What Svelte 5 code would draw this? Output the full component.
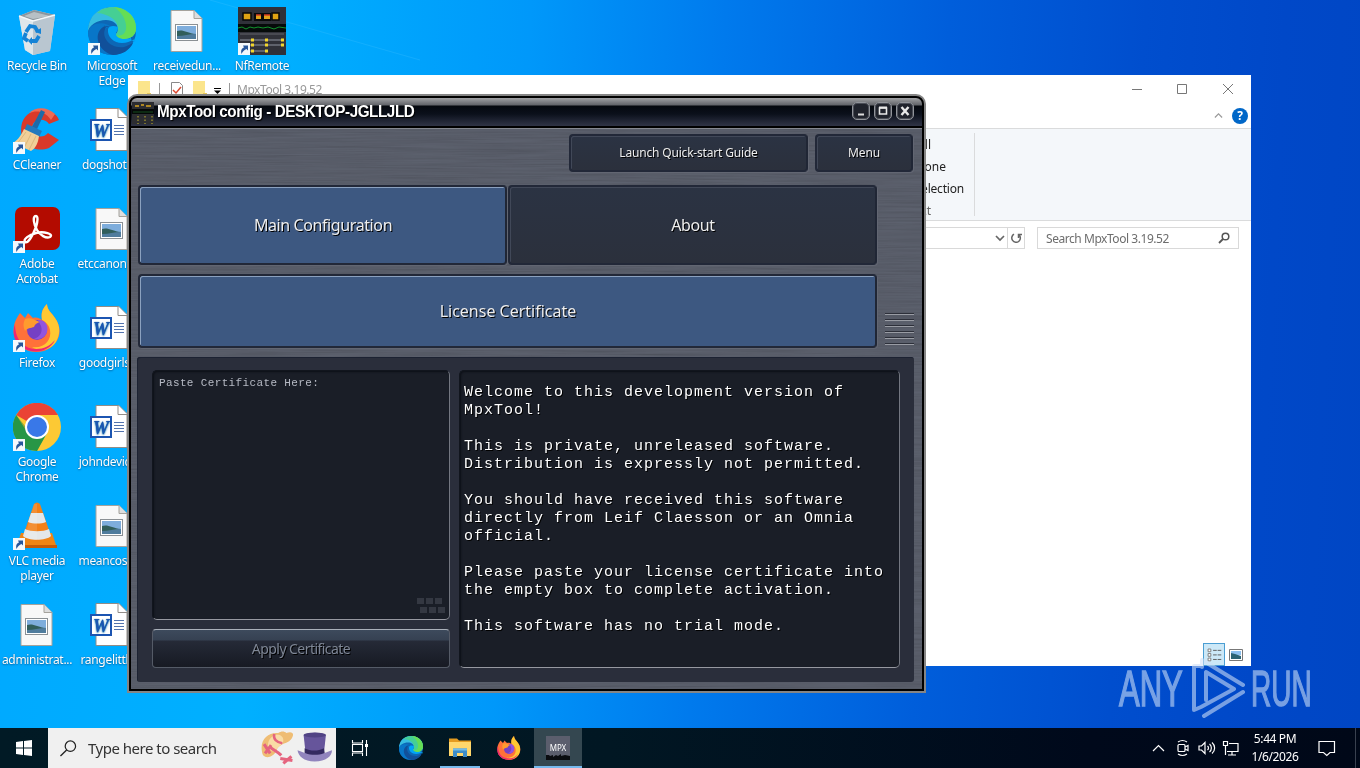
<script lang="ts">
  const shortcuts = [
    { icon: 'bin', label: 'Recycle Bin', link: false },
    { icon: 'ccleaner', label: 'CCleaner', link: true },
    { icon: 'acrobat', label: 'Adobe Acrobat', link: true },
    { icon: 'firefox', label: 'Firefox', link: true },
    { icon: 'chrome', label: 'Google Chrome', link: true },
    { icon: 'vlc', label: 'VLC media player', link: true },
    { icon: 'image', label: 'administrat...', link: false },
    { icon: 'edge', label: 'Microsoft Edge', link: true },
    { icon: 'word', label: 'dogshot.rtf', link: false },
    { icon: 'image', label: 'etccanon.jpg', link: false },
    { icon: 'word', label: 'goodgirls.rtf', link: false },
    { icon: 'word', label: 'johndevice...', link: false },
    { icon: 'image', label: 'meancosts...', link: false },
    { icon: 'word', label: 'rangelittle...', link: false },
    { icon: 'image', label: 'receivedun...', link: false },
    { icon: 'nfremote', label: 'NfRemote', link: true, col: 4 }
  ];

  const tabs = ['Main Configuration', 'About'];
  let active = $state('Main Configuration');

  const welcome = `Welcome to this development version of
MpxTool!

This is private, unreleased software.
Distribution is expressly not permitted.

You should have received this software
directly from Leif Claesson or an Omnia
official.

Please paste your license certificate into
the empty box to complete activation.

This software has no trial mode.`;

  const ribbon = ['Select all', 'Select none', 'Invert selection', 'Select'];
</script>

<svelte:head>
  <title>Desktop</title>
</svelte:head>

{#snippet icon(name: string)}
  <svg viewBox="0 0 48 48">
    {#if name === 'bin'}
      <path d="M6 9 21 3l21 5-5 36-17 4-8-5z" fill="#cfd8df" />
      <path d="m6 9 14 5 22-6-21-5z" fill="#8b969d" />
      <path d="m11 9 10-4 16 4-17 3z" fill="#b7c0c5" />
      <path d="m6 9 14 5v34l-8-5z" fill="#dfe6ea" />
      <path d="m20 14 22-6-5 36-17 4z" fill="#b9c6d0" />
      <path d="m6 9 14 5 22-6" fill="none" stroke="#f4f7f9" stroke-width="1.5" />
      <path d="m13 25 4-6 5 1 3 5m1 4-3 5h-4m-4 0-4-3 2-5" fill="none" stroke="#1583d6" stroke-width="3.8" />
      <path d="m22 25 6 2 0-6zM19 30v8l-4-4z" fill="#1583d6" />
    {:else if name === 'edge'}
      <circle cx="24" cy="24" r="24" fill="#0d67b5" />
      <path d="M0 25C0 8 12 0 24 0c14 0 24 9 24 21 0 7-5 11-12 11-5 0-8-2-8-4 0-2 2-2 2-6 0-5-5-9-12-9C9 13 1 18 0 25z" fill="#36bde0" />
      <path d="M15 2c15-6 33 3 33 19 0 7-5 11-12 11-5 0-8-2-8-4 0-2 2-2 2-6C30 13 21 7 9 6c2-2 4-3 6-4z" fill="#45cf94" />
      <path d="M26 0c13 1 22 10 22 21 0 7-5 11-12 11-5 0-8-2-8-4 7 2 11-3 10-10C37 10 32 4 26 0z" fill="#65dd55" />
      <path d="M17 18c-8 8-3 24 11 29-16 3-28-7-28-22 2-10 17-11 23-5-3 0-5 0-6 3z" fill="#0876c8" />
      <path d="M18 20c-6 10 4 22 18 20 4-1 8-4 9-4-3 7-11 12-20 12-13-3-19-17-13-25 2-3 6-5 10-3z" fill="#11509a" />
      <path d="M20 22c-1 8 6 14 14 14 5 0 8-2 11-3 2-1 3 0 2 2-3-1-4-2-4-4-9 3-16-1-15-5 1-2 2-2 2-6-5-2-9-1-10 2z" fill="#00a5f7" />
    {:else if name === 'ccleaner'}
      <path d="M46 14C41 1 15-1 9 17c-5 19 11 31 27 25l10-8-11-7c-5 6-15 4-16-4 0-10 12-12 17-5z" fill="#d9392a" />
      <path d="M42 8C34 0 22 1 16 7c8-3 16-2 22 7z" fill="#ee6a54" />
      <path d="M28 4 32 6 24 23 19 21z" fill="#1d6aa8" />
      <path d="m14 18 15 7-3 6-15-6z" fill="#2379bd" />
      <path d="m11 23 15 7c-1 7-3 12-8 15L0 37c6-4 8-8 11-14z" fill="#f1cf98" />
      <path d="m13 26-9 12m14-10-7 14m12-12-7 14" stroke="#dcb87c" fill="none" />
    {:else if name === 'acrobat'}
      <rect x="2" y="2" width="45" height="43" rx="7" fill="#b30b00" />
      <path d="M23 11c-4 0-2 9 1 14 3 5 9 9 13 7 4-3-6-6-14-4-7 2-13 6-11 9 3 2 8-7 11-15 2-6 2-11 0-11z" fill="none" stroke="#fff" stroke-width="2.4" />
    {:else if name === 'firefox'}
      <path d="M5 12 7 9l5 5 3-5 5 5c4-1 6 0 9 2-1-7 0-11 5-16 0 6 5 9 8 14 6 8 6 17 1 24-9 14-32 13-40-1C-1 28 0 20 5 12z" fill="#ff7139" />
      <path d="M34 0c0 6 5 9 8 14 6 8 5 17 1 24-7 10-18 9-24 5 12 2 20-7 18-17-1-5-4-8-8-10-1-7 0-11 5-16z" fill="#ffc832" />
      <path d="M2 20c0 18 11 25 21 25 8 0 14-3 19-9-7 15-30 15-39 1-3-5-3-11-1-17z" fill="#ee2673" />
      <circle cx="24" cy="26" r="10" fill="#7540c4" />
      <path d="M12 15c6-2 9 1 15 3-3 1-5 2-6 5-3 1-7 1-9 4-2-4-2-8 0-12z" fill="#ff9b2e" />
      <path d="M25 16c7-1 11 6 9 12-2 6-8 8-13 7 6-2 9-7 7-13z" fill="#9154df" />
    {:else if name === 'chrome'}
      <circle cx="24" cy="24" r="24" fill="#fcc934" />
      <path d="M24 24 3.2 12A24 24 0 0 1 45 12H24z" fill="#ea4335" />
      <path d="M3.2 12A24 24 0 0 0 24 48l10-18-20-1z" fill="#34a853" />
      <path d="M3.2 12A24 24 0 0 0 24 48l10-18-14 3z" fill="#188038" opacity=".45" />
      <circle cx="24" cy="24" r="12" fill="#fff" />
      <circle cx="24" cy="24" r="10" fill="#3978e8" />
    {:else if name === 'vlc'}
      <path d="M8 31h31l5 15H3z" fill="#ef8515" />
      <path d="M3 43h41v3H3z" fill="#c65c08" />
      <path d="M21 2c2-2 4-2 6 0l11 32c-4 6-24 6-28 0z" fill="#f28018" />
      <path d="m18 11 12 0 3 9c-5 2-13 2-18 0zM12 27c6 3 18 3 24 0l2 7c-5 5-23 5-28 0z" fill="#e4e7e9" />
      <path d="M21 2h3v36c-5 0-9-1-12-4z" fill="#fff" opacity=".12" />
    {:else if name === 'image'}
      <path d="M8 3.500h23l8 8v33H8z" fill="#f8f8f8" stroke="#a5a29c" />
      <path d="M31 3.500v8h8" fill="#ddd" stroke="#a5a29c" />
      <rect x="12.500" y="17.500" width="22" height="16" fill="#fff" stroke="#8b9094" />
      <rect x="14" y="19" width="19" height="13" fill="#7eaddc" />
      <path d="M14 24c6-2 10 2 19 3v5H14z" fill="#315e5b" />
      <path d="M14 29c7 0 12-2 19-2v5H14z" fill="#507c9d" />
    {:else if name === 'word'}
      <path d="M8 2.500h23l8 8v34H8z" fill="#fff" stroke="#918c87" />
      <path d="M30 2.500v9h9" fill="#fff" stroke="#918c87" />
      <path d="M26 19.500h10M26 22.500h10M26 25.500h10M26 28.500h10" stroke="#5273ad" />
      <rect x="3" y="14" width="20" height="20" fill="#fff" stroke="#1c55b1" stroke-width="2" />
      <text x="13" y="31" text-anchor="middle" class="w">W</text>
    {:else if name === 'nfremote'}
      <path d="M0 0h48v48H0z" fill="#303139" />
      <path d="M0 17h48v8H0z" fill="#060b0a" />
      <path d="M5 6h8v7H5zm29 0h7v7h-7z" fill="#dfa313" stroke="#090909" stroke-width="1.500" />
      <path d="M16 6h17v8H16z" fill="#0a0a0b" />
      <path d="M18 8h5v4h-5zm8 0h6v4h-6z" fill="#e0a41c" />
      <path d="M18 8h5m3 0h6" stroke="#d53a22" stroke-width="1.500" />
      <path d="m0 21 4-1 4 2 4-2 4 1 4-1 5 1 5-1 6 2 5-2 7 1" fill="none" stroke="#12942e" />
      <path d="M2 27h44" stroke="#62646c" />
      <path d="M2 33h42M2 38h42M2 44h28" stroke="#5f626c" stroke-width="2" />
      <path d="M13 33h3m11 0h3m13 0h3M13 38h3m11 0h3m13 0h3M13 44h3m11 0h3" stroke="#f2d62d" stroke-width="3" />
    {:else if name === 'folder'}
      <path d="M2 5h16l4 4h24v8H2z" fill="#e49b20" />
      <path d="M2 12h44v28H2z" fill="#ffd76c" />
      <path d="M10 25h28v17h-8V34H18v8h-8z" fill="#3d8dc9" />
      <path d="M10 25h28v4H10z" fill="#73bce8" />
    {/if}
  </svg>
{/snippet}

<div class="desktop">
  <svg class="wall" viewBox="0 0 1360 728" preserveAspectRatio="none">
    <path d="M210 0 420 60" stroke="#4cc4ff" opacity=".25" />
  </svg>

  <div class="icons">
    {#each shortcuts as s}
      <div class="shortcut" class:last={s.col === 4}>
        <div class="pic">
          {@render icon(s.icon)}
          {#if s.link}
            <svg class="arrow" viewBox="0 0 12 12"><path d="M0 0h12v12H0z" fill="#f4f8fc" /><path d="M3.500 11C2.500 7 4 5 6 4.500L5 2.500h5v5L8.500 6C6.500 7 5 8 3.500 11z" fill="#27569b" /></svg>
          {/if}
        </div>
        <span>{s.label}</span>
      </div>
    {/each}
  </div>

  <section class="explorer">
    <header>
      <svg class="quick" viewBox="0 0 100 26">
        <path d="M10 6h12v20H10z" fill="#fbe58c" /><path d="M19 18h4v8h-4z" fill="#e8c75a" />
        <path d="M31.500 8v12M101.500 8v12" stroke="#999" />
        <path d="M43.500 7.500h8l3 3V24h-11z" fill="#fff" stroke="#888" /><path d="m45 15 3 3 5-6" fill="none" stroke="#dc4a31" stroke-width="1.500" />
        <path d="M65 6h12v20H65z" fill="#fbe58c" /><path d="M75 18h4v8h-4z" fill="#e8c75a" />
        <path d="M86 13.500h7" stroke="#000" /><path d="M86 15.500h7l-3.500 3.500z" />
      </svg>
      <span class="caption">MpxTool 3.19.52</span>
      <svg class="controls" viewBox="0 0 106 12"><path d="M0 6.500h10M45.500 1.500h9v9h-9zM91 1l10 10M101 1 91 11" fill="none" stroke="#777" /></svg>
    </header>
    <div class="help">
      <svg viewBox="0 0 10 6" width="9"><path d="m1 5 4-4 4 4" fill="none" stroke="#999" stroke-width="1.300" /></svg>
      <b>?</b>
    </div>
    <div class="ribbon">
      <div class="select">
        {#each ribbon as r}<span>{r}</span>{/each}
      </div>
    </div>
    <div class="address">
      <div class="path">
        <svg viewBox="0 0 10 8" width="10"><path d="m1 2 4 4 4-4" fill="none" stroke="#666" stroke-width="1.700" /></svg>
        <i></i>
        <svg viewBox="0 0 12 12" width="12"><path d="M3 2.800A4.300 4.300 0 1 0 8 2.200M3.500 6V2.500H0" fill="none" stroke="#666" stroke-width="1.500" transform="matrix(-1 0 0 1 12 0)" /></svg>
      </div>
      <div class="find">
        <span>Search MpxTool 3.19.52</span>
        <svg viewBox="0 0 12 12" width="12"><circle cx="7.500" cy="4.500" r="3.300" fill="none" stroke="#555" stroke-width="1.500" /><path d="M5 7 1 11" stroke="#555" stroke-width="1.800" /></svg>
      </div>
    </div>
    <footer>
      <div class="view on">
        <svg viewBox="0 0 22 22"><path d="M4.500 5.500h3v3h-3zm0 5h3v3h-3zm0 5h3v3h-3z" fill="#fff" stroke="#777" /><path d="M10 7h4m1 0h4m-9 5h4m1 0h4m-9 5h4m1 0h4" stroke="#555" /></svg>
      </div>
      <svg width="14" height="12" viewBox="0 0 14 12"><path d="M.5.500h13v11H.5z" fill="#fff" stroke="#777" /><path d="M2 2h10v4H2z" fill="#8cc0ef" /><path d="m2 4 4 1 6 2v3H2z" fill="#2c6474" /></svg>
    </footer>
  </section>

  <section class="mpx">
    <div class="title">
      <svg class="logo" viewBox="0 0 22 22"><path d="M0 0h22v22H0z" fill="#2c2d31" /><path d="M0 7h22v5H0z" fill="#050807" /><path d="M3 4h4m2-1h3m2 1h5" stroke="#d7a521" stroke-width="1.500" /><path d="M1 10h20" stroke="#164c20" /><path d="M6 14v8m7-8v8m7-8v8" stroke="#c5b72c" stroke-dasharray="1.500 2" /></svg>
      <h1>MpxTool config - DESKTOP-JGLLJLD</h1>
      <div class="buttons">
        <button aria-label="Minimize"><svg viewBox="0 0 18 18"><path d="M6 12.500h6" stroke="#ddd" stroke-width="2" /></svg></button>
        <button aria-label="Maximize"><svg viewBox="0 0 18 18"><path d="M5.500 6h7v6h-7z" fill="none" stroke="#e8e8e8" stroke-width="1.600" /><path d="M5 5.500h8" stroke="#e8e8e8" stroke-width="2" /></svg></button>
        <button aria-label="Close"><svg viewBox="0 0 18 18"><path d="m5.500 5 7 8m0-8-7 8" stroke="#e8e8e8" stroke-width="2.400" /></svg></button>
      </div>
    </div>
    <div class="body">
      <svg class="brushed" width="100%" height="100%">
        <filter id="brush"><feTurbulence type="fractalNoise" baseFrequency="0.012 0.6" numOctaves="3" seed="4" /><feColorMatrix type="saturate" values="0" /><feComponentTransfer><feFuncA type="linear" slope="0" intercept="1" /></feComponentTransfer></filter>
        <rect width="100%" height="100%" filter="url(#brush)" />
      </svg>
      <div class="top">
        <button class="key guide">Launch Quick-start Guide</button>
        <button class="key menu">Menu</button>
      </div>
      <div class="nav">
        <div class="navs">
          <div class="tabs">
            {#each tabs as t}
              <button class="key" class:active={active === t} onclick={() => (active = t)}>{t}</button>
            {/each}
          </div>
          <button class="key active license">License Certificate</button>
        </div>
        <div class="grip">
          {#each Array(6) as _}<i></i>{/each}
        </div>
      </div>
      <div class="panel">
        <div class="left">
          <div class="well paste">
            <span>Paste Certificate Here:</span>
            <svg width="30" height="18" viewBox="0 0 30 18"><path d="M1 1h7v6H1zm9 0h7v6h-7zm9 0h7v6h-7zM4 10h7v6H4zm9 0h7v6h-7zm9 0h7v6h-7z" fill="#343842" /></svg>
          </div>
          <button class="apply">Apply Certificate</button>
        </div>
        <pre class="well">{welcome}</pre>
      </div>
    </div>
  </section>

  <div class="watermark">
    <span>ANY</span>
    <svg viewBox="0 0 56 62"><path d="M11 8H5v44l7-3 33-18-28-17v28M13 9V2l41 25M15 58l39-24" fill="none" stroke="#cfe0f7" stroke-width="4" stroke-linejoin="round" stroke-linecap="round" /></svg>
    <span class="run-word">RUN</span>
  </div>
</div>

<div class="taskbar">
  <div class="start"><svg viewBox="0 0 16 16" width="16"><path d="m0 2 7-1v6.500H0zM8 .9 16 0v7.500H8zM0 8.500h7V15l-7-1zM8 8.500h8V16l-8-1z" fill="#fff" /></svg></div>
  <div class="search">
    <svg viewBox="0 0 18 18" width="17"><circle cx="11" cy="6.500" r="5.500" fill="none" stroke="#222" stroke-width="1.300" /><path d="m7 10.500-6.500 6.500" stroke="#222" stroke-width="1.400" /></svg>
    <span>Type here to search</span>
    <svg class="hats" viewBox="0 0 70 34">
      <path d="M2 24C-3 10 6 1 17 2c3-2 6-2 8 0 5-2 8 0 6 4-2 5-7 6-10 7-3 2-5 3-6 7-3 5-9 8-13 4z" fill="#efbd74" />
      <path d="M7 12C10 1 22 2 22 9c0 5-6 6-8 11-4 1-8-3-7-8z" fill="#f9dca5" />
      <path d="M13 3c-1 5 2 8 8 9" fill="none" stroke="#e5647f" stroke-width="2.500" />
      <path d="M3 13l6 9M10 14l-6 8M8 15c4 4 8 5 12 9M19 27l12 2M22 32l8-7" fill="none" stroke="#e5647f" stroke-width="3" />
      <path d="M42 4c6-3 17-3 22 0l-2 18c-6 3-13 3-18 0z" fill="#66559b" />
      <path d="M43 17c6 3 13 3 19 0l1 6c-5 3-15 3-20 0z" fill="#342a60" />
      <path d="M36 19c3 1 5 2 8 3 5 2 13 2 18 0 3-1 5-2 8-3 0 6-6 11-17 11S37 25 36 19z" fill="#9184bd" />
      <ellipse cx="53" cy="4" rx="11" ry="2.500" fill="#514384" />
    </svg>
  </div>
  <div class="task"><svg viewBox="0 0 18 18" width="18"><path d="M1.500 1v3h10V1M1.500 17v-3h10v3M1.500 5.500h10v7h-10zM15.500 1v16" fill="none" stroke="#fff" stroke-width="1.100" /><path d="M14 5h3v3h-3z" fill="#fff" /></svg></div>
  <div class="task e">{@render icon('edge')}</div>
  <div class="task run">{@render icon('folder')}</div>
  <div class="task fox">{@render icon('firefox')}</div>
  <div class="task run current">
    <svg viewBox="0 0 24 24"><path d="M0 0h24v24H0z" fill="#5b5e6d" /><path d="M0 19h3l1 1 3-1v2l3-2 2 1 3-2v2l4-1 5 1v4H0z" fill="#0a0c10" /><text x="12" y="15" text-anchor="middle" class="m">MPX</text></svg>
  </div>
  <div class="tray">
    <svg viewBox="0 0 90 18"><g fill="none" stroke="#fff" stroke-width="1.200"><path d="m1 12 5.500-5.500L12 12" /><rect x="26" y="5.500" width="7" height="7" rx="1" /><path d="m33 8 3-1.500v5L33 10M26 3c3-2 6-2 9 0M26 15c3 2 6 2 9 0" /><path d="M47 7h2.500L53 3.500v11L49.500 11H47zM55.500 7c1.300 1 1.300 3 0 4M57.500 5c2.500 2 2.500 6 0 8M60 3.500c3.500 3 3.500 8 0 11" /><path d="M77 4.500h9v8H75M80 13v3m-4 0h8M71.500 2.500h4v4h-4zM73.500 7v9" /></g></svg>
    <div class="clock"><span>5:44 PM</span><span>1/6/2026</span></div>
    <svg class="note" viewBox="0 0 18 17"><path d="M1 1.500h15.500v11H12L8.800 15.500 5.500 12.500H1z" fill="none" stroke="#fff" stroke-width="1.200" /></svg>
  </div>
</div>

<style>
  :global(body) {
    overflow: hidden;
    font-family: 'Noto Sans', 'Open Sans', sans-serif;
    font-size: 12px;
  }

  button {
    font-family: inherit;
    padding: 0;
    border: 0;
  }

  svg {
    display: block;
  }

  .desktop {
    position: relative;
    height: 728px;
    overflow: hidden;
    background: linear-gradient(93deg, #00a9ff 0, #00b0ff 20%, #0098fa 38%, #007aed 52%, #005edb 68%, #004ece 82%, #0048c8 92%, #0046c4 100%);
  }

  .wall {
    position: absolute;
    width: 100%;
    height: 100%;
  }

  .icons {
    position: relative;
    display: grid;
    grid-auto-flow: column;
    grid-template-rows: repeat(7, 99px);
    grid-auto-columns: 75px;
    width: 300px;
    margin-left: -1px;
  }

  .shortcut {
    display: flex;
    flex-direction: column;
    align-items: center;
    padding-top: 7px;
    color: #fff;
    text-align: center;
    line-height: 15px;
    text-shadow: 0 1px 2px #0069a8, 0 0 1px #0069a8;
  }

  .shortcut.last {
    grid-column: 4;
    grid-row: 1;
  }

  .shortcut span {
    margin: 3px 0 0 1px;
    max-width: 74px;
    letter-spacing: -.3px;
  }

  .pic {
    position: relative;
    width: 48px;
    height: 48px;
  }

  .arrow {
    position: absolute;
    left: 0;
    bottom: 0;
    width: 12px;
  }

  .w {
    font: italic 900 18px 'Liberation Serif', serif;
    fill: #1c55b1;
  }

  .explorer {
    position: absolute;
    left: 128px;
    top: 75px;
    width: 1123px;
    height: 591px;
    display: flex;
    flex-direction: column;
    background: #fff;
  }

  .explorer header {
    display: flex;
    height: 29px;
    color: #999;
  }

  .quick {
    width: 100px;
    height: 26px;
    overflow: visible;
  }

  .caption {
    margin-left: 9px;
    line-height: 29px;
    letter-spacing: -.45px;
  }

  .controls {
    width: 106px;
    height: 12px;
    margin: 8px 13px 0 auto;
  }

  .help {
    display: flex;
    height: 24px;
    align-items: center;
    justify-content: flex-end;
    gap: 9px;
    padding-right: 3px;
    border-bottom: 1px solid #dadbdc;
  }

  .help b {
    width: 16px;
    height: 16px;
    border-radius: 50%;
    background: #0067c8;
    color: #fff;
    text-align: center;
    line-height: 16px;
  }

  .ribbon {
    display: flex;
    height: 91px;
    background: #f4f7fa;
    border-bottom: 1px solid #dadbdc;
  }

  .select {
    display: flex;
    flex-direction: column;
    align-items: flex-end;
    width: 836px;
    height: 83px;
    margin-top: 4px;
    padding-right: 10px;
    border-right: 1px solid #dadbdc;
    color: #222;
    line-height: 22px;
  }

  .select span:nth-child(1) {
    margin: 1px 33px 0 0;
  }

  .select span:nth-child(2) {
    margin-right: 18px;
  }

  .select span:nth-child(3) {
    letter-spacing: -.2px;
  }

  .select span:nth-child(4) {
    margin-right: 33px;
    color: #666;
  }

  .address {
    display: flex;
    gap: 12px;
    padding: 6px 12px;
    justify-content: flex-end;
  }

  .path, .find {
    display: flex;
    height: 20px;
    align-items: center;
    border: 1px solid #d9d9d9;
  }

  .path {
    width: 400px;
    justify-content: flex-end;
    gap: 4px;
    padding-right: 2px;
  }

  .path i {
    height: 20px;
    border-left: 1px solid #d9d9d9;
    margin: 0 -2px 0 -2px;
  }

  .find {
    width: 184px;
    justify-content: space-between;
    padding: 0 8px;
    color: #6d6d6d;
    letter-spacing: -.45px;
  }

  .explorer footer {
    display: flex;
    align-items: center;
    justify-content: flex-end;
    gap: 4px;
    margin-top: auto;
    padding-right: 8px;
  }

  .view {
    width: 20px;
    height: 21px;
    border: 1px solid #4b9ed3;
    background: #cce8f7;
  }

  .mpx {
    position: absolute;
    left: 127px;
    top: 94px;
    width: 799px;
    height: 599px;
    box-sizing: border-box;
    display: flex;
    flex-direction: column;
    padding: 2px;
    border: 2px solid #858585;
    border-radius: 10px 10px 0 0;
    background: #000;
    overflow: hidden;
  }

  .title {
    display: flex;
    flex: none;
    height: 28px;
    align-items: center;
    border-radius: 6px 6px 0 0;
    background: linear-gradient(#a0a1a4 0, #626469 7px, #05080e 8px, #0b101b 16px, #303446 100%);
  }

  .logo {
    width: 22px;
    height: 22px;
    margin: 2px 0 0 1px;
  }

  h1 {
    margin: 0 auto 0 3px;
    color: #fff;
    font: bold 16px 'Liberation Sans', Arial, sans-serif;
    letter-spacing: -.45px;
    text-shadow: 1px 1px 1px #000;
    transform: scaleX(.952);
    transform-origin: left;
  }

  .buttons {
    display: flex;
    gap: 4px;
    padding: 0 8px 3px 0;
  }

  .buttons button {
    width: 18px;
    height: 18px;
    border: 1px solid #91949a;
    border-radius: 5px;
    background: #20232c;
    box-shadow: inset 0 0 0 1px #4b4e57;
  }

  .buttons svg {
    margin: -1px;
  }

  .body {
    position: relative;
    display: flex;
    flex: 1;
    flex-direction: column;
    margin-top: 2px;
    padding: 5px 9px 7px 7px;
    background: #50545f;
    border-top: 1px solid #858890;
  }

  .brushed {
    position: absolute;
    inset: 0;
    opacity: .2;
    mix-blend-mode: overlay;
  }

  .top, .nav, .panel {
    position: relative;
    display: flex;
  }

  .top {
    justify-content: flex-end;
    gap: 7px;
    height: 38px;
  }

  .key {
    border: 2px solid #222838;
    border-right-color: #202635;
    border-radius: 4px;
    background: linear-gradient(#2b3343, #2b303c);
    box-shadow: inset 1px 1px 0 #414858, 1px 1px 0 #626672;
    color: #eee;
    font-size: 12px;
    letter-spacing: -.18px;
    text-shadow: 1px 1px 0 #000;
    padding-bottom: 2px;
  }

  .guide {
    width: 239px;
  }

  .menu {
    width: 98px;
  }

  .nav {
    margin-top: 13px;
    height: 163px;
  }

  .navs {
    display: flex;
    flex-direction: column;
    gap: 9px;
    width: 739px;
    flex: none;
  }

  .tabs {
    display: flex;
    gap: 1px;
    height: 80px;
  }

  .tabs .key {
    flex: 1;
    letter-spacing: -.4px;
  }

  .nav .key {
    font-size: 16px;
    padding: 0 0 0 1px;
  }

  .active {
    background: #3d5881;
    box-shadow: inset 1px 1px 0 #8ba1bf, 1px 1px 0 #626672;
  }

  .license {
    flex: 1;
    letter-spacing: 0;
  }

  .grip {
    display: flex;
    flex-direction: column;
    gap: 4px;
    width: 29px;
    flex: none;
    margin: 128px 0 0 8px;
  }

  .grip i {
    height: 1px;
    background: #999ca4;
    border-top: 1px solid #2d303a;
  }

  .panel {
    flex: 1;
    gap: 9px;
    margin: 9px -1px 0;
    padding: 13px 14px 14px 15px;
    border-radius: 3px;
    background: #2a2e3b;
    box-shadow: inset 1px 1px 0 #1c2232;
  }

  .left {
    display: flex;
    flex-direction: column;
    gap: 9px;
    width: 298px;
  }

  .well {
    box-sizing: border-box;
    margin: 0;
    border: 1px solid #11151d;
    border-right: 1px solid #737780;
    border-bottom: 1px solid #9698a0;
    border-radius: 5px;
    background: #1a1e27;
    font-family: 'Liberation Mono', monospace;
    box-shadow: inset 1px 1px 2px #0c1017;
  }

  .paste {
    display: flex;
    flex: 1;
    justify-content: space-between;
    padding: 6px 3px 4px 6px;
    color: #b6bac4;
    font-size: 11px;
    letter-spacing: .36px;
  }

  .paste svg {
    align-self: flex-end;
  }

  .apply {
    height: 39px;
    border: 1px solid #555b67;
    border-top-color: #aab0ba;
    border-radius: 4px;
    background: linear-gradient(#3d4a5c, #364152 10px, #252a37 11px, #171a23);
    color: #7e8695;
    font-size: 14px;
    letter-spacing: -.55px;
    text-shadow: 1px 1px 0 #000;
  }

  pre.well {
    flex: 1;
    padding: 13px 0 0 4px;
    color: #fff;
    font-size: 15px;
    letter-spacing: 1px;
    line-height: 18px;
    text-shadow: 1px 1px 0 #000;
  }

  .watermark {
    position: absolute;
    left: 1119px;
    top: 658px;
    display: flex;
    align-items: center;
    color: #cfe0f7;
    opacity: .58;
  }

  .watermark span {
    width: 66px;
    font: 50px/62px 'Liberation Sans', sans-serif;
    transform: scaleX(.62);
    transform-origin: left;
    -webkit-text-stroke: 1.5px #cfe0f7;
  }

  .watermark .run-word {
    transform: scaleX(.56);
  }

  .watermark svg {
    width: 56px;
    height: 62px;
    margin-left: 4px;
    margin-right: 6px;
  }

  .taskbar {
    display: flex;
    height: 40px;
    background: linear-gradient(90deg, #011a25, #011723 45%, #00091b 80%, #000818);
    color: #fff;
  }

  .start, .task {
    display: flex;
    width: 48px;
    align-items: center;
    justify-content: center;
    box-sizing: border-box;
  }

  .search {
    display: flex;
    align-items: center;
    width: 288px;
    box-sizing: border-box;
    padding-left: 12px;
    background: #f0f0f0;
    color: #333;
    font-size: 15px;
  }

  .search span {
    margin-left: 11px;
    letter-spacing: -.5px;
  }

  .hats {
    width: 71px;
    margin: 0 4px 0 auto;
  }

  .task > :global(svg) {
    max-width: 24px;
  }

  .task.e {
    width: 54px;
    margin-right: 2px;
  }

  .task.fox {
    width: 50px;
  }

  .task.run {
    width: 40px;
    margin: 0 4px 0 0;
    border-bottom: 2px solid #76b9ed;
    padding-top: 2px;
  }

  .task.current {
    width: 48px;
    margin: 0;
    background: #344750;
  }

  .m {
    font: 8px 'Noto Sans', sans-serif;
    fill: #fff;
  }

  .tray {
    display: flex;
    align-items: center;
    margin-left: auto;
    padding-right: 19px;
    margin-right: 4px;
    border-right: 1px solid #39414f;
  }

  .tray svg {
    width: 90px;
    height: 18px;
  }

  .clock {
    display: flex;
    flex-direction: column;
    width: 60px;
    margin-left: 3px;
    line-height: 18px;
    text-align: center;
    letter-spacing: -.4px;
  }

  .tray .note {
    width: 18px;
    height: 17px;
    margin-left: 13px;
  }
</style>
